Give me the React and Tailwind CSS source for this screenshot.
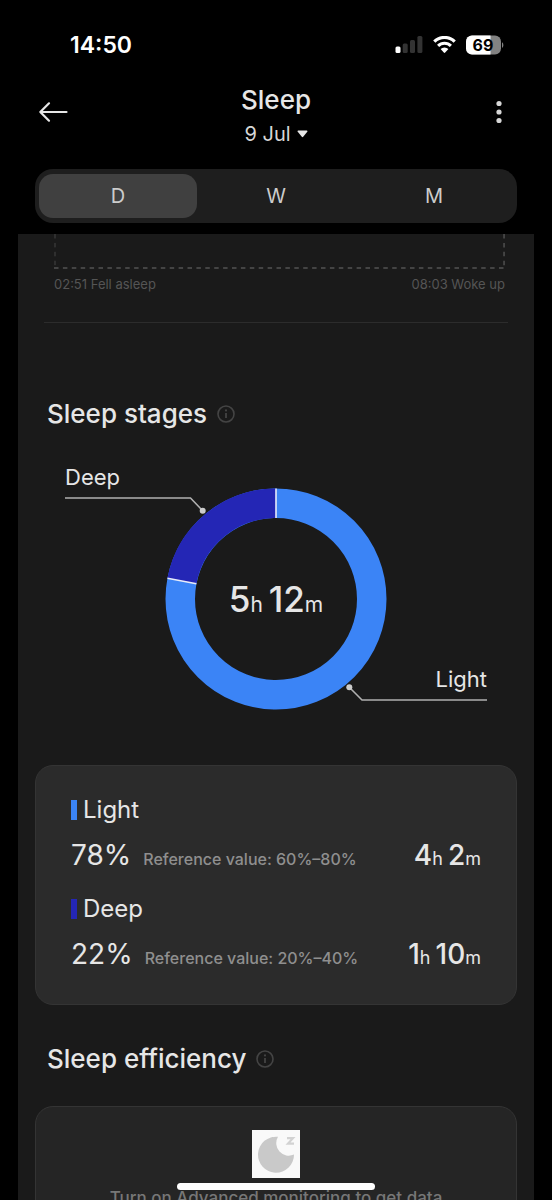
import React, { useState } from 'react'

const tabs = ['D', 'W', 'M']

const stages = [
  { name: 'Light', percent: 78, reference: '60%–80%', hours: 4, minutes: 2, bar: 'bg-[#3b84f6]' },
  { name: 'Deep', percent: 22, reference: '20%–40%', hours: 1, minutes: 10, bar: 'bg-[#2426b5]' },
]

function StatusBar() {
  return (
    <div className="flex h-20 shrink-0 items-center justify-between pt-2.5 pr-12 pl-[70px]">
      <span className="text-[23px] leading-7 font-semibold text-white">14:50</span>
      <div className="flex items-center gap-2.5">
        <svg width="28" height="20" viewBox="0 0 28 20" aria-label="Signal">
          <rect x="0.5" y="11.5" width="5" height="6.5" rx="1.5" fill="#fff" />
          <rect x="7.7" y="8.5" width="5" height="9.5" rx="1.5" fill="#333" />
          <rect x="15" y="5" width="5" height="13" rx="1.5" fill="#333" />
          <rect x="22.4" y="1" width="5" height="17" rx="1.5" fill="#333" />
        </svg>
        <svg width="23" height="18" viewBox="0 0 23 18" fill="none" stroke="#fff" aria-label="Wi-Fi">
          <path d="M1.3 5.7a14.4 14.4 0 0 1 20.4 0" strokeWidth="3.2" />
          <path d="M5.1 9.9a9 9 0 0 1 12.8 0" strokeWidth="3" />
          <path d="M7.6 13.1a5.6 5.6 0 0 1 7.8 0l-3.2 3.5q-.7.6-1.4 0z" fill="#fff" stroke="none" />
        </svg>
        <svg width="38" height="20" viewBox="0 0 38 20" aria-label="Battery 69%">
          <clipPath id="charge">
            <rect width="24.5" height="20" />
          </clipPath>
          <rect y="0.5" width="35" height="19" rx="6" fill="#828282" />
          <rect y="0.5" width="35" height="19" rx="6" fill="#fff" clipPath="url(#charge)" />
          <path d="M36 7.2c1.8.8 1.8 4.8 0 5.6z" fill="#828282" />
          <text x="17" y="15.5" textAnchor="middle" fontSize="16" fontWeight="700" fill="#000">69</text>
        </svg>
      </div>
    </div>
  )
}

function Header() {
  return (
    <header className="flex h-[89px] shrink-0 items-start justify-between px-[37px]">
      <button aria-label="Back" className="flex h-16 w-8 items-center">
        <svg className="shrink-0" width="34" height="24" viewBox="0 0 34 24" fill="none" stroke="#e6e6e6" strokeWidth="2.2" strokeLinecap="round" strokeLinejoin="round">
          <path d="M12 3.3L3.3 12l8.7 8.7M3.3 12H29.5" />
        </svg>
      </button>
      <div className="flex flex-col items-center pt-1">
        <h1 className="text-[26px] leading-8 font-medium text-[#e6e6e6]">Sleep</h1>
        <button className="flex items-center gap-1.5 text-xl leading-9 text-[#d6d6d6]">
          9 Jul
          <svg width="11" height="8" viewBox="0 0 11 8" fill="#e6e6e6">
            <path d="M1.2.5h8.6q1.2.2.5 1.2L6.2 6.8q-.7.8-1.4 0L.7 1.7Q0 .7 1.2.5z" />
          </svg>
        </button>
      </div>
      <button aria-label="More" className="flex h-16 w-8 items-center justify-center">
        <svg width="6" height="24" viewBox="0 0 6 24" fill="#d6d6d6">
          <circle cx="3" cy="3.5" r="2.6" />
          <circle cx="3" cy="12" r="2.6" />
          <circle cx="3" cy="20.5" r="2.6" />
        </svg>
      </button>
    </header>
  )
}

function InfoButton({ label }) {
  return (
    <button aria-label={label}>
      <svg width="18" height="18" viewBox="0 0 18 18" fill="none" stroke="#444" strokeWidth="1.6">
        <circle cx="9" cy="9" r="8" />
        <path d="M9 8v5" strokeWidth="1.8" />
        <circle cx="9" cy="5.4" r="1.1" fill="#444" stroke="none" />
      </svg>
    </button>
  )
}

function SectionTitle({ children }) {
  return (
    <div className="flex items-center gap-2.5 pl-[29px]">
      <h2 className="text-[26px] leading-8 font-medium text-[#e6e6e6]">{children}</h2>
      <InfoButton label={`About ${children}`} />
    </div>
  )
}

function StagesChart() {
  return (
    <svg className="mx-auto block" width="424" height="248" viewBox="0 0 424 248" fill="none">
      <circle cx="212" cy="135" r="95.75" stroke="#3b84f6" strokeWidth="29.5" />
      <path d="M117.9 117.1A95.75 95.75 0 0 1 212 39.25" stroke="#2426b5" strokeWidth="29.5" />
      <path d="M212 24.5V54M103.5 114.3L132.4 119.8" stroke="#e8ecfa" strokeWidth="1.6" />
      <g stroke="#b0b0b0" strokeWidth="1.6">
        <path d="M1 34H126.5L138.7 46.7" />
        <path d="M423 236H298L285.3 223.3" />
      </g>
      <circle cx="138.7" cy="46.7" r="3" fill="#ccc" />
      <circle cx="285.3" cy="223.3" r="3" fill="#ccc" />
      <g fill="#e6e6e6" fontSize="22">
        <text x="1" y="21">Deep</text>
        <text x="423" y="223" textAnchor="end">Light</text>
        <text x="212" y="148" textAnchor="middle" fontSize="35" fontWeight="500">
          5<tspan fontSize="21" fontWeight="400">h </tspan>12<tspan fontSize="21" fontWeight="400">m</tspan>
        </text>
      </g>
    </svg>
  )
}

function StageRow({ stage }) {
  return (
    <div>
      <div className="flex items-center gap-1.5">
        <span className={`${stage.bar} h-5 w-1.5`} />
        <h3 className="text-2xl leading-8 text-[#e6e6e6]">{stage.name}</h3>
      </div>
      <div className="mt-[9px] flex items-baseline leading-10 text-[#e6e6e6]">
        <span className="text-[28px]">{stage.percent}%</span>
        <span className="ml-3 text-base font-medium text-[#8f8f8f]">Reference value: {stage.reference}</span>
        <span className="ml-auto text-[28px] font-medium">
          {stage.hours}<span className="text-lg font-normal">h </span>{stage.minutes}<span className="text-lg font-normal">m</span>
        </span>
      </div>
    </div>
  )
}

function MoonIcon() {
  return (
    <svg width="48" height="48" viewBox="0 0 48 48">
      <rect width="48" height="48" fill="#f9f9f9" />
      <path d="M26 6.8A18 18 0 1 0 42 24.5 12.5 12.5 0 0 1 26 6.8z" fill="#c9c9c9" />
      <path d="M35 8.2h6l-5 5.4h6" fill="none" stroke="#d2d2d2" strokeWidth="2.2" />
    </svg>
  )
}

export default function App() {
  const [tab, setTab] = useState('D')

  return (
    <div className="flex h-screen flex-col overflow-hidden bg-black font-[Inter,sans-serif]">
      <StatusBar />
      <Header />

      {/* Range switch */}
      <div className="mx-[35px] grid shrink-0 grid-cols-3 rounded-[18px] bg-[#1e1e1e] px-1 py-[5px]">
        {tabs.map(t => (
          <button
            key={t}
            onClick={() => setTab(t)}
            className={`h-11 rounded-[14px] text-xl text-[#cccccc] ${tab === t ? 'bg-[#404040]' : ''}`}
          >
            {t}
          </button>
        ))}
      </div>

      <main className="mx-[18px] mt-[11px] min-h-0 flex-1 overflow-y-auto bg-[#1a1a1a] [scrollbar-width:none]">
        {/* End of the timeline */}
        <div className="mr-[29px] ml-9">
          <svg className="block w-full" height="36" stroke="#444" strokeWidth="2" strokeDasharray="4.5 4.4">
            <line x1="1" y1="0" x2="1" y2="34" strokeWidth="1" />
            <line x1="0" y1="34" x2="100%" y2="34" />
            <line x1="99.8%" y1="0" x2="99.8%" y2="34" />
          </svg>
          <div className="flex justify-between pt-1 text-[13px] leading-5 text-[#555555]">
            <span>02:51 Fell asleep</span>
            <span>08:03 Woke up</span>
          </div>
        </div>
        <hr className="mx-[26px] mt-7 border-[#2c2c2c]" />

        <section className="pt-[75px]">
          <SectionTitle>Sleep stages</SectionTitle>
          <div className="pt-[34px]">
            <StagesChart />
          </div>
          <div className="mx-[17px] mt-[53px] flex flex-col gap-[18px] rounded-[18px] border border-[#343434] bg-[#2b2b2b] px-[35px] pt-7 pb-[30px]">
            {stages.map(s => <StageRow key={s.name} stage={s} />)}
          </div>
        </section>

        <section className="pt-[38px]">
          <SectionTitle>Sleep efficiency</SectionTitle>
          <div className="mx-[17px] mt-[31px] flex flex-col items-center rounded-[18px] border border-[#343434] bg-[#252525] px-6 pt-[23px] pb-8">
            <MoonIcon />
            <p className="pt-2 text-center text-[17px] leading-6 font-medium text-[#777777]">Turn on Advanced monitoring to get data</p>
          </div>
        </section>
      </main>

      {/* Home indicator */}
      <div className="fixed bottom-2.5 left-1/2 h-[7px] w-[198px] -translate-x-1/2 rounded-full bg-white" />
    </div>
  )
}
